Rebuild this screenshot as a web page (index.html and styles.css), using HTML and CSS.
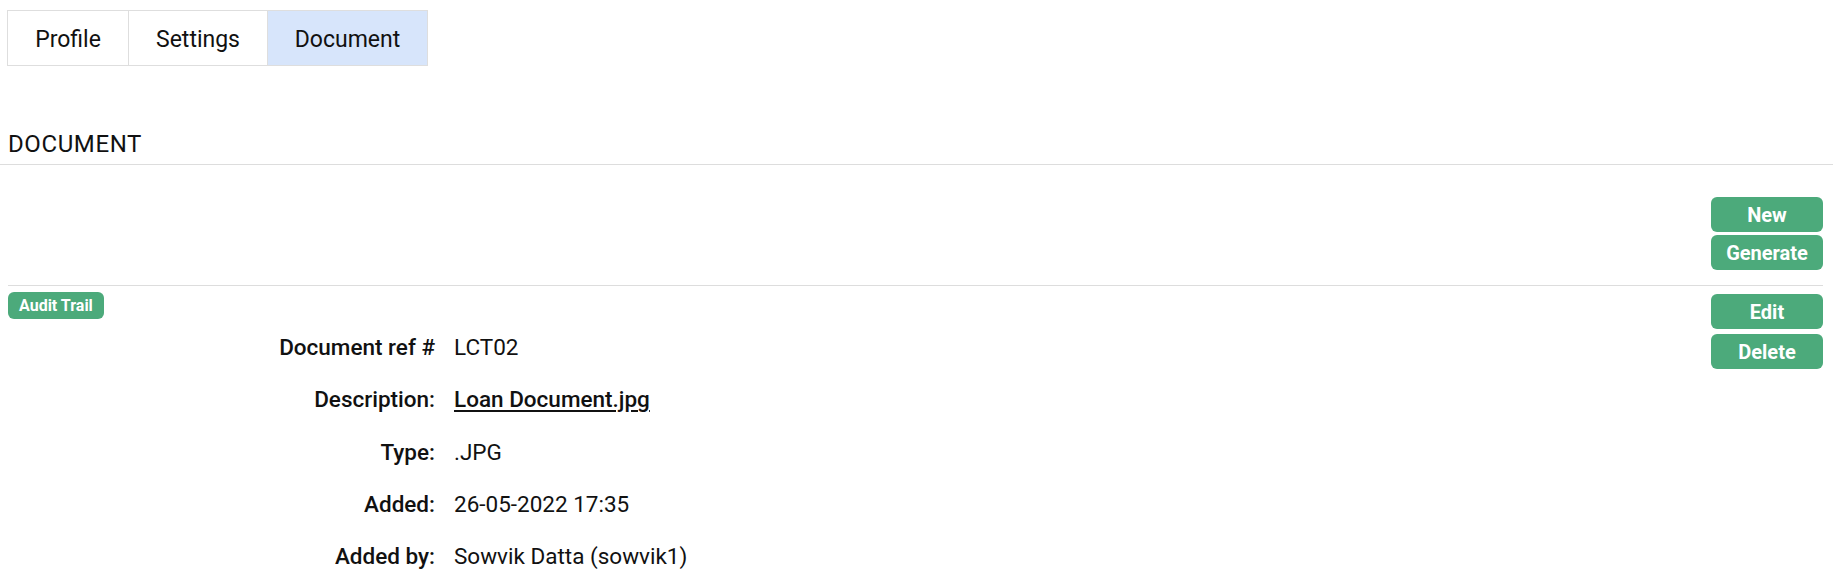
FILE: index.html
```html
<!DOCTYPE html>
<html lang="en">
<head>
<meta charset="utf-8">
<title>Document</title>
<link rel="stylesheet" href="styles.css">
</head>
<body>
  <nav class="tabs">
    <a class="tab tab-profile">Profile</a>
    <a class="tab tab-settings">Settings</a>
    <a class="tab tab-document active">Document</a>
  </nav>

  <h2 class="section-title">DOCUMENT</h2>

  <div class="toolbar">
    <div class="btn-stack toolbar-stack">
      <button class="btn btn-lg">New</button>
      <button class="btn btn-lg">Generate</button>
    </div>
  </div>

  <div class="record">
    <div class="record-main">
      <button class="btn btn-sm">Audit Trail</button>
      <dl class="details">
        <dt>Document ref #</dt><dd>LCT02</dd>
        <dt>Description:</dt><dd><a class="file-link">Loan Document.jpg</a></dd>
        <dt>Type:</dt><dd>.JPG</dd>
        <dt>Added:</dt><dd>26-05-2022 17:35</dd>
        <dt>Added by:</dt><dd>Sowvik Datta (sowvik1)</dd>
      </dl>
    </div>
    <div class="btn-stack record-stack">
      <button class="btn btn-lg">Edit</button>
      <button class="btn btn-lg">Delete</button>
    </div>
  </div>
</body>
</html>
```

FILE: styles.css
```css
* { box-sizing: border-box; }

html, body {
  margin: 0;
  padding: 0;
  background: #ffffff;
}

body {
  font-family: Roboto, "Liberation Sans", Arial, sans-serif;
  color: #111111;
  font-size: 23px;
}

.tabs {
  display: inline-flex;
  margin: 10px 0 0 7px;
  border: 1px solid #dedede;
}

.tab {
  display: block;
  height: 54px;
  line-height: 51px;
  padding-top: 3px;
  font-size: 23px;
  color: #111111;
  text-align: center;
  text-decoration: none;
}

.tab + .tab { border-left: 1px solid #dedede; }
.tab-profile { width: 120px; }
.tab-settings { width: 139px; }
.tab-document { width: 160px; }

.tab.active { background: #d7e5fb; }

.section-title {
  margin: 64px 0 0 0;
  padding: 0 0 6px 8px;
  font-size: 24px;
  line-height: 28px;
  font-weight: 400;
  letter-spacing: 0.6px;
  color: #111111;
  border-bottom: 1px solid #dddddd;
}

.toolbar {
  display: flex;
  justify-content: flex-end;
  margin: 0 10px 0 8px;
  padding: 32px 0 15px;
  border-bottom: 1px solid #dddddd;
}

.btn-stack {
  display: flex;
  flex-direction: column;
}

.toolbar-stack { gap: 3px; }
.record-stack { gap: 5px; margin-top: 2px; }

.btn {
  border: none;
  background: #4caa7b;
  color: #ffffff;
  font-family: Roboto, "Liberation Sans", Arial, sans-serif;
  font-weight: 700;
  cursor: pointer;
  padding: 0;
}

.btn-lg {
  width: 112px;
  height: 35px;
  border-radius: 6px;
  font-size: 20px;
}

.btn-sm {
  height: 27px;
  padding: 0 11px;
  border-radius: 6px;
  font-size: 16px;
}

.record {
  display: flex;
  justify-content: space-between;
  align-items: flex-start;
  margin: 0 10px 0 8px;
  padding-top: 6px;
}

.record-main {
  display: flex;
  flex-direction: column;
  align-items: flex-start;
}

.details {
  display: grid;
  grid-template-columns: 427px auto;
  column-gap: 19px;
  margin: 2px 0 0 0;
  line-height: 52.3px;
  font-size: 22.5px;
}

.details dt {
  text-align: right;
  font-weight: 500;
  color: #111111;
}

.details dd {
  margin: 0;
  color: #111111;
}

.file-link {
  font-weight: 500;
  color: #111111;
  text-decoration: underline;
  text-underline-offset: 3px;
}
```
